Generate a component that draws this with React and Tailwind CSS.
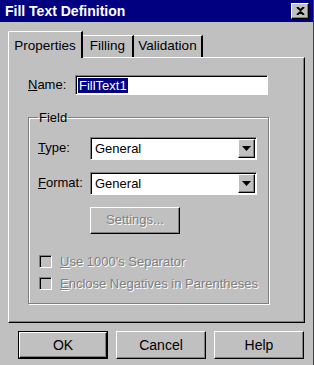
import React from 'react';

const raised = 'border-t border-l border-t-white border-l-white border-r border-b border-r-black border-b-black shadow-[inset_-1px_-1px_0_#808080]';
const sunken = 'border-t border-l border-t-[#808080] border-l-[#808080] border-r border-b border-r-white border-b-white shadow-[inset_1px_1px_0_#000]';

const Dropdown = ({ value }) => (
    <div className={`w-[167px] h-[23px] bg-white flex items-center ${sunken}`}>
        <span className="flex-1 pl-[4px] pt-[1px]">{value}</span>
        <div className={`w-[17px] h-[19px] mr-[1px] mt-[1px] bg-[#c0c0c0] flex items-center justify-center ${raised}`}>
            <svg width="9" height="5" viewBox="0 0 9 5">
                <path d="M0 0 H9 L4.5 5 Z" fill="#000" />
            </svg>
        </div>
    </div>
);

const Checkbox = ({ first, rest }) => (
    <div className="flex items-center h-[22px]">
        <div className={`w-[13px] h-[13px] bg-[#c0c0c0] ${sunken}`} />
        <span className="ml-[8px] text-[#808080] [text-shadow:1px_1px_0_#fff]">
            <span className="underline">{first}</span>{rest}
        </span>
    </div>
);

const Button = ({ label, isDefault }) => (
    <div className={`w-[90px] h-[28px] flex items-center justify-center ${isDefault ? 'border border-black' : ''}`}>
        <div className={`w-full h-full flex items-center justify-center text-[14px] ${raised}`}>
            {label}
        </div>
    </div>
);

const App = () => {
    return (
        <div className="w-[314px] h-[365px] bg-[#c0c0c0] overflow-hidden border-r border-r-[#404040] text-[13px] text-black font-['Liberation_Sans',Arial,sans-serif]">
            {/* title bar */}
            <div className="h-[22px] bg-[#000080] flex items-center justify-between pl-[5px] pr-[4px]">
                <span className="text-white font-bold text-[14px]">Fill Text Definition</span>
                <div className={`w-[18px] h-[16px] bg-[#c0c0c0] flex items-center justify-center ${raised}`}>
                    <svg width="9" height="8" viewBox="0 0 9 8">
                        <path d="M1 0 L4.5 3.2 L8 0 M1 8 L4.5 4.8 L8 8" stroke="#000" strokeWidth="2" fill="none" />
                    </svg>
                </div>
            </div>

            <div className="pl-[8px] pr-[8px] pt-[9px]">
                {/* tabs */}
                <div className="flex items-end h-[26px]">
                    <div className="w-[75px] h-[27px] mb-[-1px] relative z-10 bg-[#c0c0c0] border-t border-l border-t-white border-l-white border-r-2 border-r-black rounded-tl-[2px] flex items-start justify-center pt-[4px] text-[13.5px]">
                        Properties
                    </div>
                    <div className="w-[51px] h-[22px] border-t border-t-white border-r-2 border-r-black flex items-center justify-center text-[13.5px]">
                        Filling
                    </div>
                    <div className="w-[69px] h-[22px] border-t border-t-white border-r-2 border-r-black flex items-center justify-center text-[13.5px]">
                        Validation
                    </div>
                </div>

                {/* panel */}
                <div className={`h-[266px] ${raised} pl-[19px] pt-[17px]`}>
                    <div className="flex items-center h-[20px]">
                        <span className="w-[47px]"><span className="underline">N</span>ame:</span>
                        <div className={`w-[193px] h-[20px] bg-white flex items-center pl-[2px] ${sunken}`}>
                            <span className="bg-[#000080] text-white px-[1px] leading-[15px]">FillText1</span>
                        </div>
                    </div>

                    <fieldset className="w-[241px] h-[196px] mt-[13px] border border-[#808080] shadow-[1px_1px_0_#fff,inset_1px_1px_0_#fff] pl-[9px] pt-[9px]">
                        <legend className="px-[1px]">Field</legend>
                        <div className="flex items-center">
                            <span className="w-[52px]"><span className="underline">T</span>ype:</span>
                            <Dropdown value="General" />
                        </div>
                        <div className="flex items-center mt-[12px]">
                            <span className="w-[52px]"><span className="underline">F</span>ormat:</span>
                            <Dropdown value="General" />
                        </div>
                        <div className={`ml-[52px] mt-[12px] w-[90px] h-[27px] flex items-center justify-center text-[#808080] [text-shadow:1px_1px_0_#fff] ${raised}`}>
                            Settings...
                        </div>
                        <div className="mt-[17px] pl-[1px]">
                            <Checkbox first="U" rest="se 1000's Separator" />
                            <Checkbox first="E" rest="nclose Negatives in Parentheses" />
                        </div>
                    </fieldset>
                </div>

                {/* buttons */}
                <div className="flex mt-[8px] pl-[10px] gap-[8px]">
                    <Button label="OK" isDefault />
                    <Button label="Cancel" />
                    <Button label="Help" />
                </div>
            </div>
        </div>
    );
};

export default App;
